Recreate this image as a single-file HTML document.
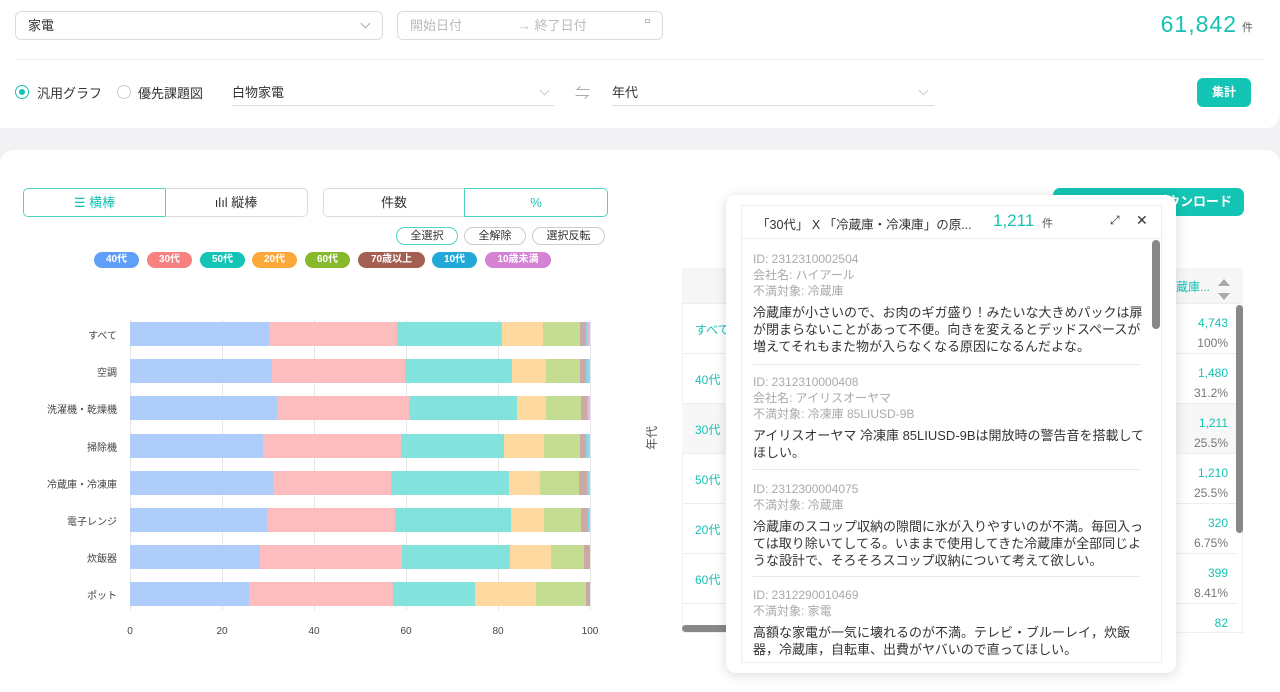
<!DOCTYPE html>
<html><head><meta charset="utf-8"><style>
*{box-sizing:border-box;margin:0;padding:0}
body{width:1280px;height:692px;overflow:hidden;background:#f2f2f4;font-family:"Liberation Sans","Noto Sans CJK JP",sans-serif;color:#333;position:relative}
.a{position:absolute}
.teal{color:#17c2b4}
.panel1{left:0;top:0;width:1280px;height:128px;background:#fff;border-radius:0 0 14px 0}
.panel2{left:0;top:150px;width:1280px;height:542px;background:#fff;border-radius:14px 14px 0 0}
.sel{border:1px solid #dcdcdc;border-radius:6px;height:29px;font-size:13px;line-height:27px;padding-left:12px}
.chev{width:7px;height:7px;border-right:1px solid #aaa;border-bottom:1px solid #aaa;transform:rotate(45deg)}
.btn{border:1px solid #dcdcdc;height:29px;font-size:13px;text-align:center;line-height:27px}
.tag{height:16px;border-radius:8px;color:#fff;font-size:10px;font-weight:bold;line-height:16px;text-align:center;top:252px}
.sm{height:18px;border:1px solid #ccc;border-radius:9px;font-size:11px;line-height:16px;text-align:center;top:227px}
.ylab{font-size:10px;color:#444;right:1163px;text-align:right;width:100px}
.row{display:flex;height:24px;left:130px;width:460px}
.row div{height:24px}
.c1{background:#afcdfb}.c2{background:#fdbcbd}.c3{background:#84e2dc}.c4{background:#fdd89f}.c5{background:#c5dc93}.c6{background:#cca9a4}.c7{background:#8bd4ec}.c8{background:#e6b8e6}
.xl{font-size:10px;color:#444;top:626px;width:30px;text-align:center}
.grid{top:320px;height:290px;width:1px;background:#e6e6e6}
.tr{left:682px;width:555px;height:50px;border-bottom:1px solid #eee}
.tl{left:695px;font-size:12px;color:#17c2b4}
.tv{right:52px;text-align:right;font-size:12px;line-height:20px}
.meta{color:#aaa;font-size:12px;line-height:16px}
.txt{color:#333;font-size:13px;line-height:17px}
.item{left:753px;width:392px}
.sep{left:753px;width:387px;height:1px;background:#e8e8e8}
</style></head><body>
<div class="a panel1"></div>
<div class="a sel" style="left:15px;top:11px;width:368px">家電</div>
<div class="a chev" style="left:362px;top:20px"></div>
<div class="a sel" style="left:397px;top:11px;width:266px;color:#bbb">開始日付<span class="a" style="left:120px;top:0">→ 終了日付</span></div>
<div class="a" style="left:645px;top:19px;width:5px;height:4px;border:1px solid #bbb"></div>
<div class="a teal" style="right:43px;top:11px;font-size:23px;letter-spacing:1px">61,842</div>
<div class="a" style="right:27px;top:19px;font-size:11px;color:#555">件</div>
<div class="a" style="left:15px;top:59px;width:1250px;height:1px;background:#eee"></div>
<div class="a" style="left:15px;top:85px;width:14px;height:14px;border:1px solid #17c2b4;border-radius:50%"></div>
<div class="a" style="left:19px;top:89px;width:6px;height:6px;background:#17c2b4;border-radius:50%"></div>
<div class="a" style="left:37px;top:83px;font-size:13px">汎用グラフ</div>
<div class="a" style="left:117px;top:85px;width:14px;height:14px;border:1px solid #ccc;border-radius:50%"></div>
<div class="a" style="left:138px;top:83px;font-size:13px">優先課題図</div>
<div class="a" style="left:232px;top:82px;width:322px;height:24px;border-bottom:1px solid #ddd;font-size:13px">白物家電</div>
<div class="a chev" style="left:541px;top:87px;border-color:#ccc"></div>
<div class="a" style="left:575px;top:82px;font-size:15px;color:#aaa">⇋</div>
<div class="a" style="left:612px;top:82px;width:322px;height:24px;border-bottom:1px solid #ddd;font-size:13px">年代</div>
<div class="a chev" style="left:920px;top:87px;border-color:#ccc"></div>
<div class="a" style="left:1197px;top:78px;width:54px;height:29px;background:#14c4b4;border-radius:6px;color:#fff;font-size:12px;font-weight:bold;text-align:center;line-height:29px">集計</div>

<div class="a panel2"></div>
<div class="a btn teal" style="left:23px;top:188px;width:143px;border:1px solid #4fd3c6;border-radius:5px 0 0 5px">☰ 横棒</div>
<div class="a btn" style="left:165px;top:188px;width:143px;border-left:none;border-radius:0 5px 5px 0">ılıl 縦棒</div>
<div class="a btn" style="left:323px;top:188px;width:142px;border-radius:5px 0 0 5px">件数</div>
<div class="a btn teal" style="left:464px;top:188px;width:144px;border:1px solid #4fd3c6;border-radius:0 5px 5px 0">%</div>
<div class="a sm" style="left:396px;width:62px;border-color:#4fd3c6">全選択</div>
<div class="a sm" style="left:464px;width:62px">全解除</div>
<div class="a sm" style="left:532px;width:73px">選択反転</div>
<div class="a tag" style="left:94px;width:45px;background:#5f9ff7">40代</div>
<div class="a tag" style="left:147px;width:45px;background:#f78080">30代</div>
<div class="a tag" style="left:200px;width:45px;background:#14c4b4">50代</div>
<div class="a tag" style="left:252px;width:45px;background:#fba73a">20代</div>
<div class="a tag" style="left:305px;width:45px;background:#86b92b">60代</div>
<div class="a tag" style="left:358px;width:67px;background:#a45f52">70歳以上</div>
<div class="a tag" style="left:432px;width:45px;background:#23a9d8">10代</div>
<div class="a tag" style="left:485px;width:66px;background:#d483d4">10歳未満</div>

<div class="a grid" style="left:130px"></div><div class="a grid" style="left:222px"></div><div class="a grid" style="left:314px"></div><div class="a grid" style="left:406px"></div><div class="a grid" style="left:498px"></div><div class="a grid" style="left:590px"></div>

<div class="a row" style="top:322px"><div class="c1" style="width:139px"></div><div class="c2" style="width:128px"></div><div class="c3" style="width:105px"></div><div class="c4" style="width:41px"></div><div class="c5" style="width:37px"></div><div class="c6" style="width:6px"></div><div class="c7" style="width:2px"></div><div class="c8" style="width:2px"></div></div>
<div class="a row" style="top:359px"><div class="c1" style="width:142px"></div><div class="c2" style="width:133px"></div><div class="c3" style="width:107px"></div><div class="c4" style="width:34px"></div><div class="c5" style="width:34px"></div><div class="c6" style="width:6px"></div><div class="c7" style="width:3px"></div><div class="c8" style="width:1px"></div></div>
<div class="a row" style="top:396px"><div class="c1" style="width:147px"></div><div class="c2" style="width:132px"></div><div class="c3" style="width:108px"></div><div class="c4" style="width:29px"></div><div class="c5" style="width:35px"></div><div class="c6" style="width:6px"></div><div class="c7" style="width:1px"></div><div class="c8" style="width:2px"></div></div>
<div class="a row" style="top:434px"><div class="c1" style="width:133px"></div><div class="c2" style="width:138px"></div><div class="c3" style="width:103px"></div><div class="c4" style="width:40px"></div><div class="c5" style="width:36px"></div><div class="c6" style="width:6px"></div><div class="c7" style="width:3px"></div><div class="c8" style="width:1px"></div></div>
<div class="a row" style="top:471px"><div class="c1" style="width:143px"></div><div class="c2" style="width:118px"></div><div class="c3" style="width:118px"></div><div class="c4" style="width:31px"></div><div class="c5" style="width:39px"></div><div class="c6" style="width:8px"></div><div class="c7" style="width:2px"></div><div class="c8" style="width:1px"></div></div>
<div class="a row" style="top:508px"><div class="c1" style="width:137px"></div><div class="c2" style="width:128px"></div><div class="c3" style="width:116px"></div><div class="c4" style="width:33px"></div><div class="c5" style="width:37px"></div><div class="c6" style="width:7px"></div><div class="c7" style="width:2px"></div><div class="c8" style="width:0px"></div></div>
<div class="a row" style="top:545px"><div class="c1" style="width:130px"></div><div class="c2" style="width:142px"></div><div class="c3" style="width:108px"></div><div class="c4" style="width:41px"></div><div class="c5" style="width:33px"></div><div class="c6" style="width:6px"></div><div class="c7" style="width:0px"></div><div class="c8" style="width:0px"></div></div>
<div class="a row" style="top:582px"><div class="c1" style="width:119px"></div><div class="c2" style="width:144px"></div><div class="c3" style="width:82px"></div><div class="c4" style="width:61px"></div><div class="c5" style="width:50px"></div><div class="c6" style="width:4px"></div><div class="c7" style="width:0px"></div><div class="c8" style="width:0px"></div></div>

<div class="a ylab" style="top:327px">すべて</div>
<div class="a ylab" style="top:364px">空調</div>
<div class="a ylab" style="top:401px">洗濯機・乾燥機</div>
<div class="a ylab" style="top:439px">掃除機</div>
<div class="a ylab" style="top:476px">冷蔵庫・冷凍庫</div>
<div class="a ylab" style="top:513px">電子レンジ</div>
<div class="a ylab" style="top:550px">炊飯器</div>
<div class="a ylab" style="top:587px">ポット</div>
<div class="a xl" style="left:115px">0</div><div class="a xl" style="left:207px">20</div><div class="a xl" style="left:299px">40</div><div class="a xl" style="left:391px">60</div><div class="a xl" style="left:483px">80</div><div class="a xl" style="left:575px">100</div>

<!-- table -->
<div class="a" style="left:1053px;top:188px;width:191px;height:28px;background:#14c4b4;border-radius:7px;color:#fff;font-size:13px;font-weight:bold;line-height:28px;text-align:right;padding-right:12px">ダウンロード</div>
<div class="a" style="left:638px;top:430px;width:26px;height:16px;font-size:12px;color:#555;transform:rotate(-90deg);text-align:center">年代</div>
<div class="a" style="left:682px;top:268px;width:561px;height:365px;border:1px solid #f0f0f0"></div>
<div class="a" style="left:682px;top:268px;width:561px;height:36px;background:#f6f6f6;border-bottom:1px solid #eee"></div>
<div class="a teal" style="left:1176px;top:278px;font-size:12px">蔵庫...</div>
<div class="a" style="left:1218px;top:279px;width:0;height:0;border:6px solid transparent;border-bottom:7px solid #aaa;border-top:none"></div>
<div class="a" style="left:1218px;top:293px;width:0;height:0;border:6px solid transparent;border-top:7px solid #aaa;border-bottom:none"></div>
<div class="a tr" style="top:304px"></div><div class="a tr" style="top:354px"></div><div class="a tr" style="top:404px;background:#f7f7f7"></div><div class="a tr" style="top:454px"></div><div class="a tr" style="top:504px"></div><div class="a tr" style="top:554px"></div>
<div class="a tl" style="top:321px">すべて</div><div class="a tl" style="top:371px">40代</div><div class="a tl" style="top:421px">30代</div><div class="a tl" style="top:471px">50代</div><div class="a tl" style="top:521px">20代</div><div class="a tl" style="top:571px">60代</div>
<div class="a tv" style="top:313px"><span class="teal">4,743</span><br><span style="color:#777">100%</span></div>
<div class="a tv" style="top:363px"><span class="teal">1,480</span><br><span style="color:#777">31.2%</span></div>
<div class="a tv" style="top:413px"><span class="teal">1,211</span><br><span style="color:#777">25.5%</span></div>
<div class="a tv" style="top:463px"><span class="teal">1,210</span><br><span style="color:#777">25.5%</span></div>
<div class="a tv" style="top:513px"><span class="teal">320</span><br><span style="color:#777">6.75%</span></div>
<div class="a tv" style="top:563px"><span class="teal">399</span><br><span style="color:#777">8.41%</span></div>
<div class="a tv" style="top:613px;height:18px;overflow:hidden"><span class="teal">82</span></div>
<div class="a" style="left:1236px;top:305px;width:7px;height:228px;background:#888;border-radius:4px"></div>
<div class="a" style="left:682px;top:625px;width:50px;height:7px;background:#888;border-radius:4px"></div>

<!-- popup -->
<div class="a" style="left:726px;top:195px;width:450px;height:478px;background:#fff;border-radius:10px;box-shadow:0 2px 12px rgba(0,0,0,.15)"></div>
<div class="a" style="left:741px;top:205px;width:421px;height:458px;border:1px solid #eee"></div>
<div class="a" style="left:742px;top:238px;width:419px;height:1px;background:#eee"></div>
<div class="a" style="left:757px;top:214px;font-size:12.5px">「30代」 X 「冷蔵庫・冷凍庫」の原...</div>
<div class="a teal" style="left:993px;top:211px;font-size:17px">1,211</div>
<div class="a" style="left:1042px;top:215px;font-size:11px;color:#555">件</div>
<div class="a" style="left:1110px;top:213px;font-size:12px;color:#333">⤢</div>
<div class="a" style="left:1136px;top:212px;font-size:14px;color:#333">✕</div>
<div class="a" style="left:1152px;top:240px;width:8px;height:89px;background:#888;border-radius:4px"></div>

<div class="a item" style="top:251px"><div class="meta">ID: 2312310002504<br>会社名: ハイアール<br>不満対象: 冷蔵庫</div><div class="txt" style="margin-top:5px">冷蔵庫が小さいので、お肉のギガ盛り！みたいな大きめパックは扉が閉まらないことがあって不便。向きを変えるとデッドスペースが増えてそれもまた物が入らなくなる原因になるんだよな。</div></div>
<div class="a sep" style="top:364px"></div>
<div class="a item" style="top:374px"><div class="meta">ID: 2312310000408<br>会社名: アイリスオーヤマ<br>不満対象: 冷凍庫 85LIUSD-9B</div><div class="txt" style="margin-top:5px">アイリスオーヤマ 冷凍庫 85LIUSD-9Bは開放時の警告音を搭載してほしい。</div></div>
<div class="a sep" style="top:469px"></div>
<div class="a item" style="top:481px"><div class="meta">ID: 2312300004075<br>不満対象: 冷蔵庫</div><div class="txt" style="margin-top:5px">冷蔵庫のスコップ収納の隙間に氷が入りやすいのが不満。毎回入っては取り除いてしてる。いままで使用してきた冷蔵庫が全部同じような設計で、そろそろスコップ収納について考えて欲しい。</div></div>
<div class="a sep" style="top:576px"></div>
<div class="a item" style="top:587px"><div class="meta">ID: 2312290010469<br>不満対象: 家電</div><div class="txt" style="margin-top:5px">高額な家電が一気に壊れるのが不満。テレビ・ブルーレイ，炊飯器，冷蔵庫，自転車、出費がヤバいので直ってほしい。</div></div>
</body></html>
